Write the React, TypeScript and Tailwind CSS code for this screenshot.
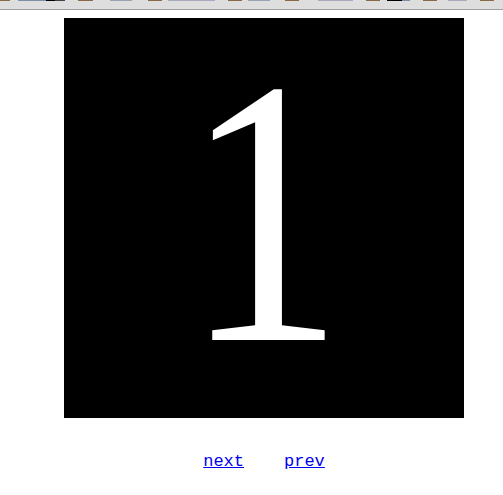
const STRIP = [
  { w: "w-[10px]", ml: "ml-0", c: "bg-[#8a6a45]" },
  { w: "w-[28px]", ml: "ml-[8px]", c: "bg-[#7d8fa8]" },
  { w: "w-[9px]", ml: "ml-0", c: "bg-black" },
  { w: "w-[10px]", ml: "ml-0", c: "bg-[#444]" },
  { w: "w-[15px]", ml: "ml-[13px]", c: "bg-[#8a6a45]" },
  { w: "w-[22px]", ml: "ml-[17px]", c: "bg-[#9aa3b5]" },
  { w: "w-[14px]", ml: "ml-[16px]", c: "bg-[#8a6a45]" },
  { w: "w-[47px]", ml: "ml-[6px]", c: "bg-[#a9a9c0]" },
  { w: "w-[14px]", ml: "ml-[13px]", c: "bg-[#8a6a45]" },
  { w: "w-[22px]", ml: "ml-[6px]", c: "bg-[#9aa3b5]" },
  { w: "w-[14px]", ml: "ml-[15px]", c: "bg-[#8a6a45]" },
  { w: "w-[35px]", ml: "ml-[19px]", c: "bg-[#a9a9c0]" },
  { w: "w-[14px]", ml: "ml-[13px]", c: "bg-[#8a6a45]" },
  { w: "w-[15px]", ml: "ml-[7px]", c: "bg-black" },
  { w: "w-[8px]", ml: "ml-0", c: "bg-[#7d8fa8]" },
  { w: "w-[14px]", ml: "ml-[13px]", c: "bg-[#8a6a45]" },
  { w: "w-[19px]", ml: "ml-[11px]", c: "bg-[#a9a9c0]" },
  { w: "w-[14px]", ml: "ml-[13px]", c: "bg-[#8a6a45]" },
];

export default function App() {
  return (
    <div className="w-[503px] h-[495px] bg-white overflow-hidden">
      <div className="h-[10px] bg-[#dedede] border-b border-[#a0a0a0] flex items-start">
        {STRIP.map((s, i) => (
          <div key={i} className={`h-[1px] ${s.w} ${s.ml} ${s.c}`} />
        ))}
      </div>
      <div className="ml-[64px] w-[400px]">
        <div className="mt-[8px] h-[400px] bg-black flex items-center justify-center">
          <span
            className="text-white text-[380px] leading-none mb-[12px] scale-x-[0.84]"
            style={{ fontFamily: '"Liberation Serif", serif' }}
          >
            1
          </span>
        </div>
        <div
          className="mt-[34px] flex justify-center gap-[40px] text-[17px] leading-[19px]"
          style={{ fontFamily: '"Liberation Mono", monospace' }}
        >
          <a href="#" className="text-[#0000ee] underline">next</a>
          <a href="#" className="text-[#0000ee] underline">prev</a>
        </div>
      </div>
    </div>
  );
}
